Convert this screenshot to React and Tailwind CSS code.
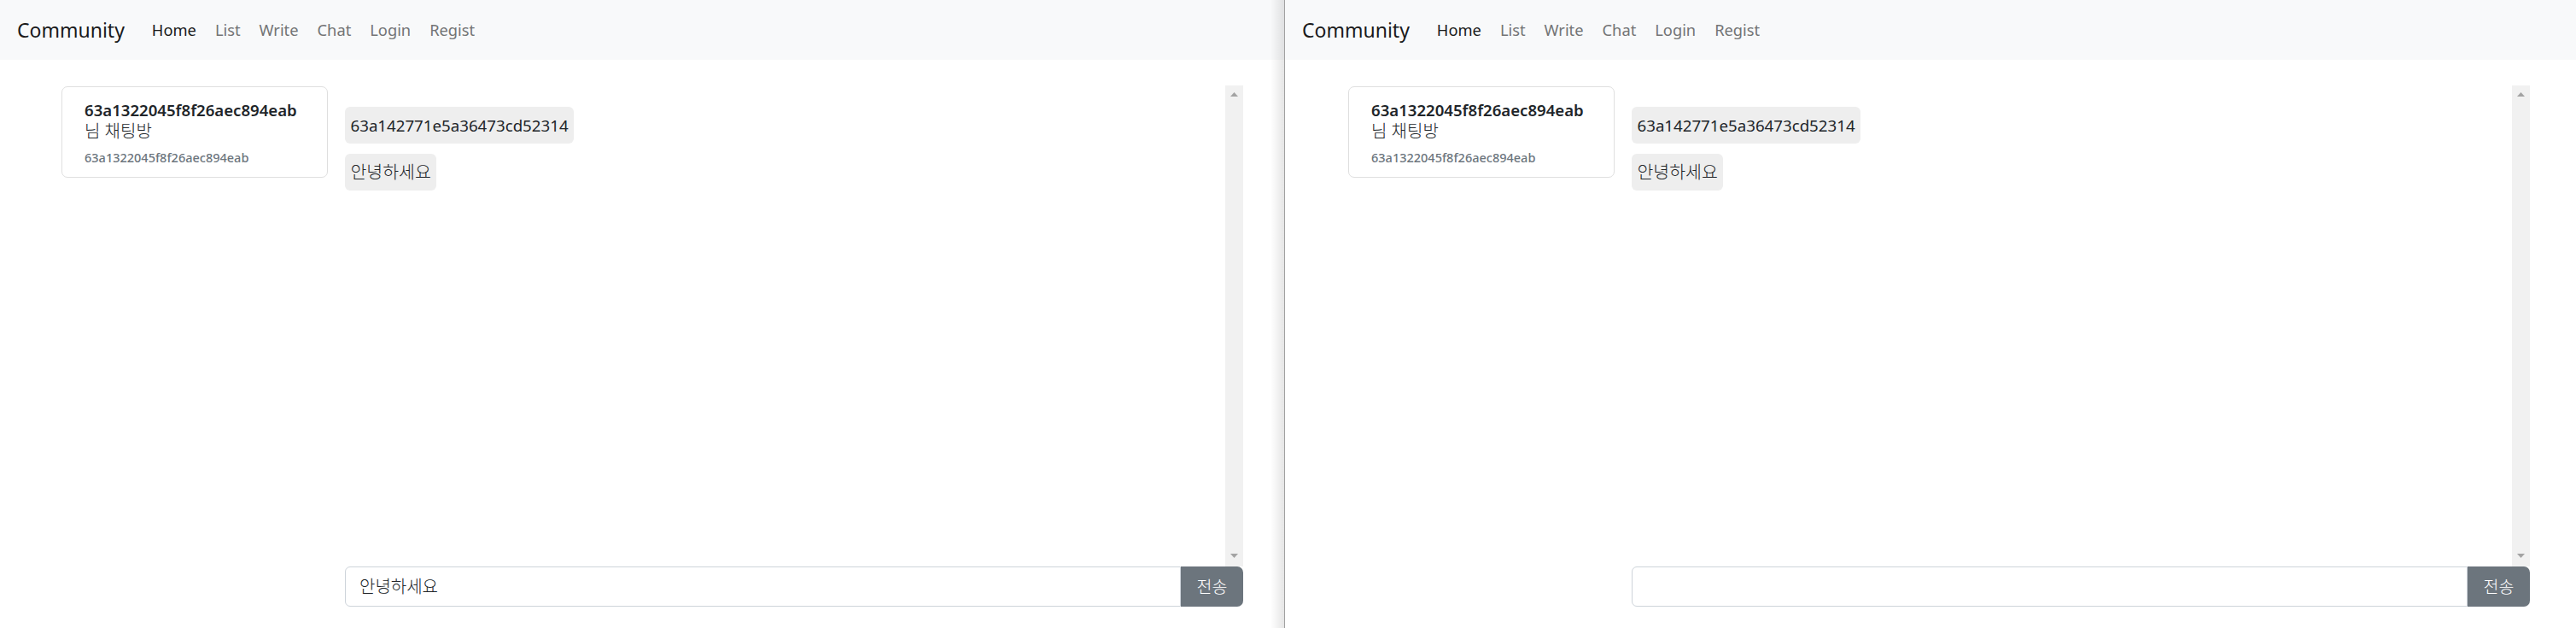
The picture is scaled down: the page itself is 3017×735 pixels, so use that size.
import clsx from "clsx";

const links = [
  { label: "Home", active: true },
  { label: "List" },
  { label: "Write" },
  { label: "Chat" },
  { label: "Login" },
  { label: "Regist" },
];

const roomId = "63a1322045f8f26aec894eab";

const messages = [
  { text: "63a142771e5a36473cd52314", size: "text-[18.7px]" },
  { text: "안녕하세요", size: "text-[20.5px] font-light" },
];

function Navbar() {
  return (
    <nav className="h-[70px] shrink-0 bg-[#f8f9fa] flex items-center pl-[20px]">
      <span className="text-[23px] text-[#1a1a1a] mr-[21px]">Community</span>
      <ul className="flex">
        {links.map((link) => (
          <li
            key={link.label}
            className={clsx(
              "px-[11px] text-[18.3px]",
              link.active ? "text-[#1a1a1a]" : "text-[#737475]"
            )}
          >
            {link.label}
          </li>
        ))}
      </ul>
    </nav>
  );
}

function Arrow({ down }) {
  return (
    <svg width="9" height="5" viewBox="0 0 9 5">
      <path d={down ? "M0 0 L9 0 L4.5 5 Z" : "M0 5 L4.5 0 L9 5 Z"} fill="#a3a3a3" />
    </svg>
  );
}

function Scrollbar() {
  return (
    <div className="w-[21px] shrink-0 bg-[#f1f1f1] flex flex-col items-center justify-between pt-[8px] pb-[10px]">
      <Arrow />
      <Arrow down />
    </div>
  );
}

function RoomCard() {
  return (
    <div className="w-[312px] h-[107px] shrink-0 mt-[1px] border border-[#dfdfdf] rounded-[7px] pt-[14px] pl-[26px]">
      <div className="leading-[25px] text-[#212529]">
        <div className="text-[18.6px] font-semibold">{roomId}</div>
        <div className="text-[20px] font-light">님 채팅방</div>
      </div>
      <div className="mt-[10px] text-[14.5px] leading-[17px] font-medium text-[#6c757d]">
        {roomId}
      </div>
    </div>
  );
}

function ChatWindow({ className, pad, draft }) {
  return (
    <div className={clsx("relative flex flex-col bg-white", className)}>
      <Navbar />
      <div className={clsx("flex pt-[30px]", pad)}>
        <RoomCard />
        <div className="ml-[20px] w-[1052px] flex flex-col">
          <div className="h-[563px] flex">
            <div className="flex-1 pt-[25px] flex flex-col items-start gap-[12px]">
              {messages.map((m, i) => (
                <div
                  key={i}
                  className={clsx(
                    "bg-[#eeeeee] rounded-[6px] px-[6.5px] py-[6px] leading-[31px] text-[#212529]",
                    m.size
                  )}
                >
                  {m.text}
                </div>
              ))}
            </div>
            <Scrollbar />
          </div>
          <div className="flex h-[47px]">
            <input
              readOnly
              value={draft}
              className="flex-1 min-w-0 border border-[#ced4da] rounded-l-[6px] pl-[16px] text-[20px] font-light text-[#212529] outline-none"
            />
            <button className="w-[73px] shrink-0 bg-[#6c757d] rounded-r-[7px] text-white text-[19.5px] font-light">
              전송
            </button>
          </div>
        </div>
      </div>
    </div>
  );
}

export default function App() {
  return (
    <div className="w-[3017px] h-[735px] flex overflow-hidden bg-white font-['Noto_Sans','Noto_Sans_CJK_KR',sans-serif]">
      <div className="relative w-[1504px] shrink-0">
        <ChatWindow className="h-full" pad="pl-[72px]" draft="안녕하세요" />
        <div className="absolute right-0 top-0 bottom-0 w-[16px] bg-linear-to-r from-transparent to-black/10" />
      </div>
      <div className="w-[1px] shrink-0 bg-[#a0a0a0]" />
      <ChatWindow className="flex-1" pad="pl-[74px]" draft="" />
    </div>
  );
}
